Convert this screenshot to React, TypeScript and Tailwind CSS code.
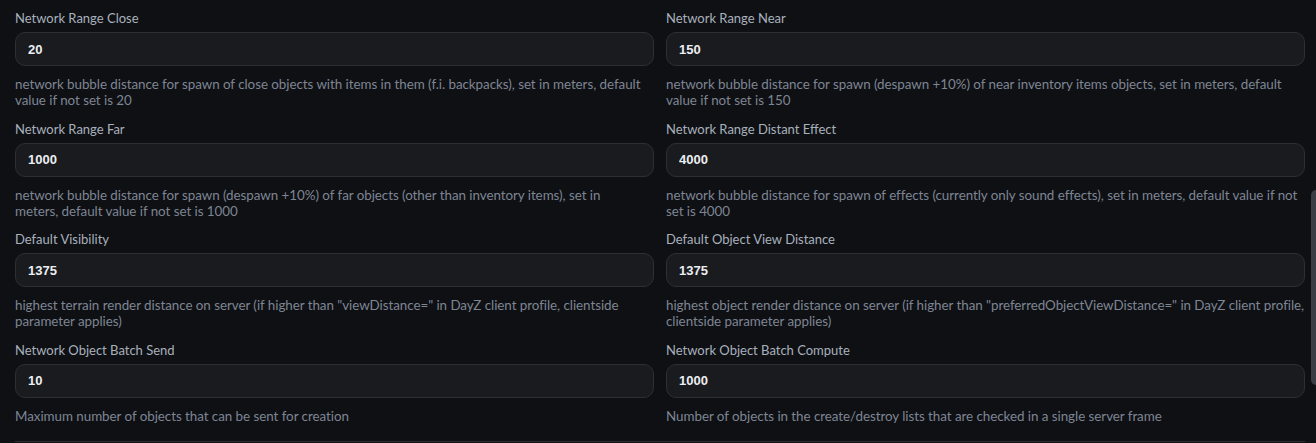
import React from 'react';

interface Setting {
  label: string;
  value: string;
  description: string;
}

// descriptions keep the line breaks of the original panel
const settings: Setting[] = [
  {
    label: 'Network Range Close',
    value: '20',
    description:
      'network bubble distance for spawn of close objects with items in them (f.i. backpacks), set in meters, default value if not set is 20',
  },
  {
    label: 'Network Range Near',
    value: '150',
    description:
      'network bubble distance for spawn (despawn +10%) of near inventory items objects, set in meters, default value if not set is 150',
  },
  {
    label: 'Network Range Far',
    value: '1000',
    description:
      'network bubble distance for spawn (despawn +10%) of far objects (other than inventory items), set in\nmeters, default value if not set is 1000',
  },
  {
    label: 'Network Range Distant Effect',
    value: '4000',
    description:
      'network bubble distance for spawn of effects (currently only sound effects), set in meters, default value if not set is 4000',
  },
  {
    label: 'Default Visibility',
    value: '1375',
    description:
      'highest terrain render distance on server (if higher than "viewDistance=" in DayZ client profile, clientside parameter applies)',
  },
  {
    label: 'Default Object View Distance',
    value: '1375',
    description:
      'highest object render distance on server (if higher than "preferredObjectViewDistance=" in DayZ client profile,\nclientside parameter applies)',
  },
  {
    label: 'Network Object Batch Send',
    value: '10',
    description: 'Maximum number of objects that can be sent for creation',
  },
  {
    label: 'Network Object Batch Compute',
    value: '1000',
    description: 'Number of objects in the create/destroy lists that are checked in a single server frame',
  },
];

const Field: React.FC<{ setting: Setting }> = ({ setting }) => {
  return (
    <div className="flex flex-col">
      <label className="text-[13px] leading-[18px] text-[#a9b0bc]">{setting.label}</label>
      <input
        type="text"
        defaultValue={setting.value}
        className="mt-[5px] h-[34px] w-full rounded-[10px] border border-[#2d2f35] bg-[#1a1b1f] px-3 text-[13px] font-bold text-[#eceef2] outline-none [font-family:'Liberation_Sans',Arial,sans-serif]"
      />
      <p className="mt-[10px] whitespace-pre-line text-[13.4px] leading-4 tracking-[-0.05px] text-[#7e8593]">
        {setting.description}
      </p>
    </div>
  );
};

export default function App() {
  return (
    <div className="relative h-[443px] w-[1316px] overflow-hidden bg-[#0e1014] [font-family:Lato,'Noto_Sans',sans-serif]">
      <div className="pl-[15px] pr-[11px] pt-[9px]">
        <div className="grid grid-cols-2 gap-x-3 gap-y-[11.5px]">
          {settings.map((s) => (
            <Field key={s.label} setting={s} />
          ))}
        </div>
        <div className="mt-[17px] h-px bg-[#2a2d33]" />
      </div>
      {/* scrollbar thumb */}
      <div className="absolute right-0 top-[190px] h-[195px] w-[5px] rounded-l-full bg-[#3a3d44]" />
    </div>
  );
}
